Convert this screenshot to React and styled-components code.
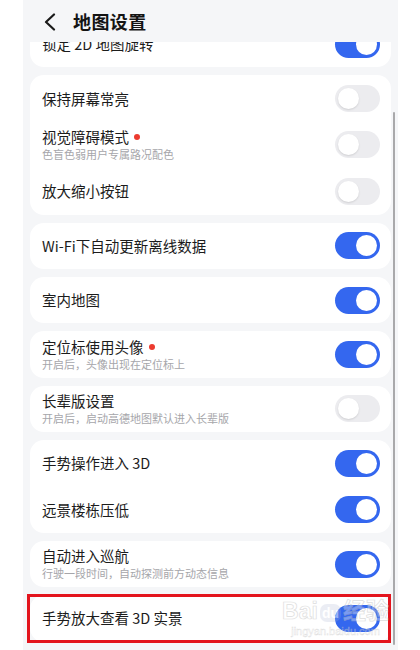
import React from 'react'
import styled, {createGlobalStyle} from 'styled-components'

const GlobalStyle = createGlobalStyle`
  html, body {
    margin: 0;
    padding: 0;
    background: #ffffff;
  }
  body {
    font-family: "Noto Sans CJK SC", "Noto Sans", sans-serif;
  }
`

const groups = [
  [{title: '锁定 2D 地图旋转', on: true}],
  [
    {title: '保持屏幕常亮', on: false},
    {title: '视觉障碍模式', sub: '色盲色弱用户专属路况配色', dot: true, on: false},
    {title: '放大缩小按钮', on: false},
  ],
  [{title: 'Wi-Fi下自动更新离线数据', on: true}],
  [{title: '室内地图', on: true}],
  [{title: '定位标使用头像', sub: '开启后，头像出现在定位标上', dot: true, on: true}],
  [{title: '长辈版设置', sub: '开启后，启动高德地图默认进入长辈版', on: false}],
  [
    {title: '手势操作进入 3D', on: true},
    {title: '远景楼栋压低', on: true},
  ],
  [{title: '自动进入巡航', sub: '行驶一段时间，自动探测前方动态信息', on: true}],
  [{title: '手势放大查看 3D 实景', on: true, marked: true}],
]

export default function App() {
  return (
    <>
      <GlobalStyle />
      <Screen>
        <Header>
          <BackButton>
            <svg width="14" height="18" viewBox="0 0 14 18">
              <path d="M11 1.5 L3 9 L11 16.5" fill="none" stroke="#1a1a1a" strokeWidth="2.2" strokeLinecap="round" strokeLinejoin="round" />
            </svg>
          </BackButton>
          <Title>地图设置</Title>
        </Header>
        <Viewport>
          <List>
            {groups.map((items, i) => (
              <Card key={i}>
                {items.map(it => (
                  <Row key={it.title}>
                    <Texts>
                      <RowTitle>
                        {it.title}
                        {it.dot && <Dot />}
                      </RowTitle>
                      {it.sub && <RowSub>{it.sub}</RowSub>}
                    </Texts>
                    <Toggle $on={it.on}>
                      <Knob $on={it.on} />
                    </Toggle>
                  </Row>
                ))}
                {items.some(it => it.marked) && (
                  <>
                    <Marker />
                    <Watermark>
                      <Brand>Bai<Paw>du</Paw>经验</Brand>
                      <Site>jingyan.baidu.com</Site>
                    </Watermark>
                  </>
                )}
              </Card>
            ))}
          </List>
        </Viewport>
        <ScrollBar />
      </Screen>
    </>
  )
}

const Screen = styled.div`
  position: relative;
  margin-left: 23px;
  width: 375px;
  height: 650px;
  background: #f5f6f8;
  display: flex;
  flex-direction: column;
  overflow: hidden;
`

const Header = styled.div`
  position: relative;
  z-index: 2;
  flex: none;
  height: 42px;
  display: flex;
  align-items: center;
  background: #f5f6f8;
`

const BackButton = styled.div`
  display: flex;
  align-items: center;
  margin-left: 20px;
  margin-top: 2px;
`

const Title = styled.h1`
  margin: 0 0 0 16px;
  font-size: 18px;
  font-weight: 700;
  color: #141414;
  letter-spacing: 0.4px;
`

const Viewport = styled.div`
  flex: 1;
  overflow: hidden;
`

const List = styled.div`
  display: flex;
  flex-direction: column;
  gap: 8px;
  padding: 0 7px;
  margin-top: -21px;
`

const Card = styled.div`
  position: relative;
  background: #ffffff;
  border-radius: 14px;
  display: flex;
  flex-direction: column;
`

const Row = styled.div`
  height: 46.4px;
  display: flex;
  align-items: center;
  justify-content: space-between;
  padding: 0 11px 0 12px;
`

const Texts = styled.div`
  display: flex;
  flex-direction: column;
`

const RowTitle = styled.div`
  display: flex;
  align-items: center;
  font-size: 14.5px;
  line-height: 18px;
  color: #1c1c1c;
`

const Dot = styled.span`
  width: 6px;
  height: 6px;
  border-radius: 50%;
  background: #ec3b2f;
  margin-left: 5px;
`

const RowSub = styled.div`
  font-size: 11px;
  line-height: 15px;
  color: #a6a6aa;
  margin-top: 1px;
`

const Toggle = styled.div`
  flex: none;
  width: 45px;
  height: 27px;
  border-radius: 14px;
  background: ${p => (p.$on ? '#3467ef' : '#ececef')};
  display: flex;
  align-items: center;
  justify-content: ${p => (p.$on ? 'flex-end' : 'flex-start')};
  padding: 0 3px;
  box-sizing: border-box;
`

const Knob = styled.div`
  width: 21px;
  height: 21px;
  border-radius: 50%;
  background: #ffffff;
  box-shadow: ${p => (p.$on ? 'none' : '0 1px 2px rgba(0,0,0,0.12)')};
`

const Marker = styled.div`
  position: absolute;
  top: -1px;
  left: -3px;
  right: 0;
  bottom: -1px;
  border: 3px solid #e3141d;
  pointer-events: none;
`

const Watermark = styled.div`
  position: absolute;
  right: 2px;
  top: 3px;
  display: flex;
  flex-direction: column;
  align-items: center;
  pointer-events: none;
  opacity: 0.5;
`

const Brand = styled.div`
  display: flex;
  align-items: center;
  font-family: "Liberation Sans", "Noto Sans CJK SC", sans-serif;
  font-size: 23px;
  font-weight: 700;
  line-height: 27px;
  color: rgba(255,255,255,0.7);
  -webkit-text-stroke: 0.7px #bdbdbd;
`

const Paw = styled.span`
  font-size: 14px;
  line-height: 16px;
  margin: 2px 2px 0;
  padding: 1px 2px;
  border-radius: 7px;
  color: #ffffff;
  -webkit-text-stroke: 0;
  background: rgba(170,180,210,0.45);
`

const Site = styled.div`
  font-family: "Liberation Sans", sans-serif;
  font-size: 11px;
  line-height: 12px;
  color: rgba(255,255,255,0.7);
  -webkit-text-stroke: 0.4px #bdbdbd;
`

const ScrollBar = styled.div`
  position: absolute;
  z-index: 3;
  left: 370px;
  top: 112px;
  width: 2px;
  height: 533px;
  background: #a9a9ab;
  border-radius: 1px;
`
